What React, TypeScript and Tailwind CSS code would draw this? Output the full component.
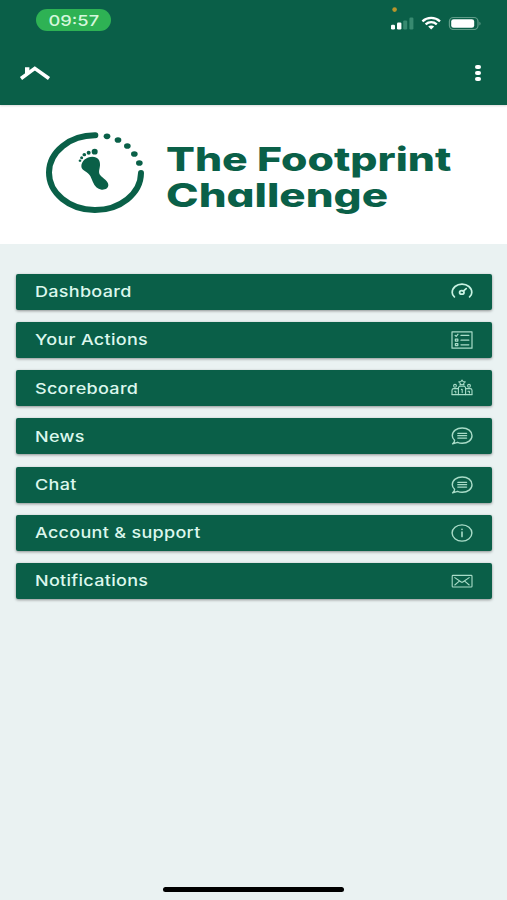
import React from 'react';

interface MenuItem {
  label: string;
  icon: React.ReactElement;
}

const IconFrame: React.FC<{ children: React.ReactNode }> = ({ children }) => (
  <svg
    className="h-[20px] w-[24px] text-[#a9dcc8]"
    viewBox="0 0 24 20"
    fill="none"
    stroke="currentColor"
    strokeWidth={1.3}
    strokeLinecap="round"
    strokeLinejoin="round"
    aria-hidden="true"
  >
    {children}
  </svg>
);

const GaugeIcon: React.FC = () => (
  <IconFrame>
    <g stroke="#c8f2e2">
      <path strokeWidth={1.7} d="M4.4 14.9C2.8 13.6 2.2 12.2 2.2 10.6C2.2 5.6 6.6 2.2 12 2.2S21.8 5.6 21.8 10.6C21.8 12.2 21.2 13.6 19.6 14.9" />
      <ellipse cx="11.8" cy="10.4" rx="2.2" ry="1.8" strokeWidth={1.8} />
      <path strokeWidth={1.7} d="M13.3 9.2L16.2 6.6" />
    </g>
  </IconFrame>
);

const ListIcon: React.FC = () => (
  <IconFrame>
    <rect x="2" y="1.8" width="20" height="16.4" strokeWidth={1.2} />
    <path d="M5.2 5.4l1 .9 1.7-2M11 5.4h7.8M11 10.2h7.8M11 14.8h7.8" />
    <rect x="5.4" y="9.1" width="2.4" height="2" />
    <rect x="5.4" y="13.6" width="2.4" height="2" />
  </IconFrame>
);

const PodiumIcon: React.FC = () => (
  <IconFrame>
    <g strokeWidth={1.1}>
      <path d="M12 2l1 1.5 2.2.4-1.5 1.4.3 1.8-2-.7-2 .7.3-1.8-1.5-1.4 2.2-.4z" />
      <path d="M8.4 16.6V10.2c0-1.4 1-2 2-2h3.2c1 0 2 .6 2 2v6.4M11.4 11.4h.8v3.2" />
      <circle cx="5" cy="7.8" r="1.4" />
      <circle cx="19" cy="7.8" r="1.4" />
      <path d="M2 16.6v-4.4c0-1 .8-1.6 1.8-1.6h4.4M22 16.6v-4.4c0-1-.8-1.6-1.8-1.6h-4.4M1.8 16.6h20.4M4.6 13.2h1.2v1.8M18 13.2h1.4v1.8" />
    </g>
  </IconFrame>
);

const ChatIcon: React.FC = () => (
  <IconFrame>
    <path
      strokeWidth={1.4}
      d="M4.6 14.2C3 12.9 2.3 11.4 2.3 9.7C2.3 5.2 6.6 2 12.2 2S22 5.2 22 9.7S17.8 17.2 12.2 17.2c-1.8 0-3.3-.3-4.6-.9l-5 1.6c1.4-1 2-2.2 2-3.7z"
    />
    <path d="M7.8 7.3h8.8M7.8 9.7h8.8M7.8 12.1h8.8" />
  </IconFrame>
);

const InfoIcon: React.FC = () => (
  <IconFrame>
    <ellipse cx="12" cy="10" rx="9.9" ry="8.1" strokeWidth={1.4} />
    <path strokeWidth={1.6} d="M12 9v4.6M12 6.2v.2" />
  </IconFrame>
);

const MailIcon: React.FC = () => (
  <IconFrame>
    <g strokeWidth={1.1}>
      <rect x="2.2" y="4.4" width="19.8" height="11.6" rx="0.8" />
      <path d="M4.8 6.6l6 4.2c.8.6 1.6.6 2.4 0l6-4.2M4.8 14l4.2-3.6M19.2 14L15 10.4" />
    </g>
  </IconFrame>
);

const menuItems: MenuItem[] = [
  { label: 'Dashboard', icon: <GaugeIcon /> },
  { label: 'Your Actions', icon: <ListIcon /> },
  { label: 'Scoreboard', icon: <PodiumIcon /> },
  { label: 'News', icon: <ChatIcon /> },
  { label: 'Chat', icon: <ChatIcon /> },
  { label: 'Account & support', icon: <InfoIcon /> },
  { label: 'Notifications', icon: <MailIcon /> },
];

const StatusIcons: React.FC = () => (
  <svg className="h-[30px] w-[95px]" viewBox="0 0 95 30" aria-hidden="true">
    <circle cx="7.6" cy="9.6" r="2.3" fill="#b8952b" />
    <rect x="4" y="24.8" width="4" height="4.6" rx="1.2" fill="#fff" />
    <rect x="10" y="22.6" width="4.4" height="6.8" rx="1.2" fill="#fff" />
    <rect x="16.2" y="20.4" width="4" height="9" rx="1.2" fill="#388a70" />
    <rect x="22.4" y="17.6" width="4" height="11.8" rx="1.2" fill="#388a70" />
    <g fill="none" stroke="#fff" strokeWidth="2.3">
      <path d="M35.4 21.3C40.4 16.8 48 16.8 53 21.3" />
      <path d="M38.6 24.4C41.9 21.5 46.5 21.5 49.8 24.4" />
    </g>
    <path d="M41.2 26.6c1.6-1.4 4.4-1.4 6 0L44.2 29.4z" fill="#fff" />
    <rect x="62.4" y="17.5" width="28.6" height="12" rx="4" fill="none" stroke="#5f9c88" strokeWidth="1.2" />
    <rect x="64.2" y="19.2" width="23" height="8.6" rx="2.4" fill="#fff" />
    <path d="M92.4 21.8c1.6.5 1.6 3.3 0 3.8z" fill="#5f9c88" />
  </svg>
);

const FootprintLogo: React.FC = () => (
  <svg className="h-[115px] w-[130px] shrink-0" viewBox="0 0 390 345" fill="#0a6048" aria-hidden="true">
    <path
      d="M196 61A138 112 0 1 0 333 174"
      fill="none"
      stroke="#0a6048"
      strokeWidth="18"
      strokeLinecap="round"
    />
    <ellipse cx="231" cy="64" rx="10" ry="8.5" />
    <ellipse cx="264" cy="75" rx="10" ry="8.5" />
    <ellipse cx="292" cy="93" rx="10" ry="8.5" />
    <ellipse cx="313" cy="117" rx="10" ry="8.5" />
    <ellipse cx="328" cy="144" rx="10" ry="8.5" />
    <ellipse cx="194" cy="110" rx="9" ry="8.5" />
    <ellipse cx="176" cy="113" rx="6" ry="6" />
    <ellipse cx="163" cy="119" rx="5.5" ry="5" />
    <ellipse cx="155" cy="128" rx="4.5" ry="4.5" />
    <ellipse cx="150" cy="137" rx="4" ry="3.5" />
    <path d="M154 154C154 138 169 125 187 125C204 125 211 137 210 151C209 164 204 172 211 181C219 191 235 198 235 210C235 219 226 225 215 224C202 223 194 213 189 202C183 188 181 179 170 172C160 166 154 162 154 154Z" />
  </svg>
);

const App: React.FC = () => (
  <div className="flex h-[900px] w-full flex-col overflow-hidden bg-[#eaf2f2] font-['Inter',sans-serif]">
    <header className="z-10 h-[105px] shrink-0 bg-[#0a5f48] shadow-[0_1px_2px_rgba(0,0,0,0.15)]">
      <div className="flex h-[31px] items-start justify-between pr-[25px] pl-[36px]">
        <div className="mt-[9px] flex h-[22px] w-[75px] items-center justify-center rounded-full bg-[#2eb254]">
          <span className="scale-x-[1.22] text-[15px] leading-none font-medium text-[#d4f7dc]">09:57</span>
        </div>
        <StatusIcons />
      </div>
      <nav className="flex h-[74px] items-center justify-between pr-[26px] pl-[19px]">
        <button aria-label="Home" className="mt-[9px]">
          <svg className="h-[18px] w-[32px]" viewBox="0 0 32 18" fill="none" aria-hidden="true">
            <path d="M2 14.5L15.8 4.4L30 14.5" stroke="#fff" strokeWidth="3.6" />
            <path d="M6 3.3h4.4v4L6 10.6z" fill="#fff" />
          </svg>
        </button>
        <button aria-label="Menu" className="mt-[10px] flex flex-col items-center gap-[1.2px]">
          <span className="h-[4.8px] w-[5.8px] rounded-full bg-white" />
          <span className="h-[4.8px] w-[5.8px] rounded-full bg-white" />
          <span className="h-[4.8px] w-[5.8px] rounded-full bg-white" />
        </button>
      </nav>
    </header>

    <section className="flex h-[139px] shrink-0 items-start bg-white pt-[10px] pl-[30px]">
      <FootprintLogo />
      <h1 className="mt-[26px] ml-[6px] flex flex-col items-start text-[33px] leading-[36px] font-extrabold text-[#0a6048] [font-feature-settings:'cv11']">
        <span className="origin-left scale-x-[1.295] whitespace-nowrap">The Footprint</span>
        <span className="origin-left scale-x-[1.33] whitespace-nowrap">Challenge</span>
      </h1>
    </section>

    <main className="flex flex-1 flex-col gap-[12.2px] pr-[15px] pl-[15.5px] pt-[29.8px]">
      {menuItems.map((item) => (
        <button
          key={item.label}
          className="flex h-[36px] shrink-0 items-center justify-between rounded-[2px] bg-[#0a5f48] pr-[18px] pl-[19.5px] shadow-[0_1px_3px_rgba(0,0,0,0.4)]"
        >
          <span className="origin-left scale-x-[1.2] text-[15px] leading-none font-medium tracking-[0.25px] whitespace-nowrap text-[#dcf7ed]">
            {item.label}
          </span>
          {item.icon}
        </button>
      ))}
    </main>

    <footer className="flex h-[13px] shrink-0 justify-center">
      <div className="h-[5px] w-[181px] rounded-full bg-black" />
    </footer>
  </div>
);

export default App;
